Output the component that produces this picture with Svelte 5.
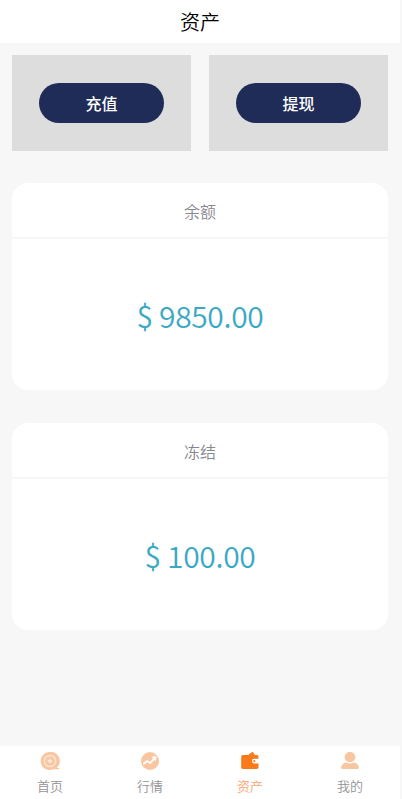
<script>
	const actions = ['充值', '提现'];

	const balances = [
		{ label: '余额', amount: '9850.00' },
		{ label: '冻结', amount: '100.00' },
	];

	const tabs = [
		{ id: 'home', label: '首页' },
		{ id: 'market', label: '行情' },
		{ id: 'assets', label: '资产' },
		{ id: 'mine', label: '我的' },
	];

	let current = 'assets';
</script>

<div class="page">
	<header class="title-bar">资产</header>

	<main>
		<div class="actions">
			{#each actions as action}
				<div class="action-box">
					<button>{action}</button>
				</div>
			{/each}
		</div>

		{#each balances as item}
			<section class="card">
				<h2>{item.label}</h2>
				<div class="amount">$ {item.amount}</div>
			</section>
		{/each}
	</main>

	<nav>
		{#each tabs as tab}
			<button class="tab" class:active={tab.id === current} on:click={() => (current = tab.id)}>
				<svg width="20" height="20" viewBox="0 0 20 20">
					{#if tab.id === 'home'}
						<path fill="currentColor" d="M10 1a9 9 0 1 0 3.4 17.2H19v-1.4h-2.4A9 9 0 0 0 10 1z" />
						<circle cx="10" cy="10" r="5.6" fill="none" stroke="#fff" stroke-width="1.5" opacity=".55" />
						<path stroke="#fff" stroke-width="1.4" d="M10 7.8v4.4M7.8 10h4.4" opacity=".7" />
					{:else if tab.id === 'market'}
						<circle cx="10" cy="10" r="9" fill="currentColor" />
						<path fill="none" stroke="#fff" stroke-width="1.9" stroke-linejoin="round" d="M3.3 13l3.7-2.9 3 1.9 4.7-4.5" />
						<path fill="#fff" d="M11.3 5.9l5.2-.8-.6 5z" />
					{:else if tab.id === 'assets'}
						<path fill="currentColor" d="M3 4h5.2l3.6-2.7c.5-.4 1-.3 1.4.2L15 4h1.7c1 0 1.8.7 1.8 1.7v2.1h-4.3a2.3 2.3 0 0 0 0 4.6h4.3v3.9c0 1-.8 1.7-1.8 1.7H3c-1 0-1.8-.7-1.8-1.7V5.7C1.2 4.7 2 4 3 4z" />
						<circle cx="14.3" cy="10.1" r="1.1" fill="currentColor" />
					{:else}
						<ellipse cx="10" cy="6.2" rx="5.4" ry="5.1" fill="currentColor" />
						<path fill="currentColor" d="M6 11.5q4 2 8 0c3.3.8 4.7 3.1 4.9 5.1.1 1-.4 1.4-1.4 1.4h-15c-1 0-1.5-.4-1.4-1.4.2-2 1.6-4.3 4.9-5.1z" />
					{/if}
				</svg>
				<span>{tab.label}</span>
			</button>
		{/each}
	</nav>
</div>

<style>
	:global(body) {
		background: #f7f7f7;
		font-family: 'Noto Sans CJK SC', sans-serif;
		font-weight: 350;
	}

	.page {
		width: 400px;
		height: 799px;
		display: flex;
		flex-direction: column;
	}

	button {
		border: none;
		padding: 0;
		font-family: inherit;
		font-weight: inherit;
		cursor: pointer;
	}

	.title-bar {
		height: 43px;
		line-height: 43px;
		background: #fff;
		color: #000;
		font-size: 20px;
		text-align: center;
	}

	main {
		flex: 1;
		padding: 12px 12px 0;
	}

	.actions {
		display: flex;
		gap: 18px;
		margin-bottom: 32px;
	}

	.action-box {
		flex: 1;
		height: 96px;
		display: flex;
		align-items: center;
		justify-content: center;
		background: #ddd;
	}

	.action-box button {
		width: 125px;
		height: 40px;
		border-radius: 20px;
		background: #1f2c58;
		color: #fff;
		font-size: 16px;
		font-weight: 500;
	}

	.card {
		height: 207.4px;
		margin-bottom: 32.6px;
		border-radius: 16px;
		background: #fff;
		text-align: center;
	}

	.card h2 {
		height: 54px;
		margin: 0;
		border-bottom: 2px solid #f6f6f6;
		color: #868691;
		font-size: 16px;
		font-weight: inherit;
		line-height: 56px;
	}

	.amount {
		color: #3ba9c4;
		font-size: 30px;
		letter-spacing: -0.35px;
		line-height: 152px;
	}

	nav {
		height: 53px;
		display: flex;
		background: #fff;
	}

	.tab {
		flex: 1;
		display: flex;
		flex-direction: column;
		align-items: center;
		padding-top: 5px;
		background: none;
		color: #f8c6a0;
	}

	.tab span {
		margin-top: 5px;
		color: #939393;
		font-size: 13px;
		line-height: 19px;
	}

	.tab.active {
		color: #f87a18;
	}

	.tab.active span {
		color: #f9a470;
	}
</style>
